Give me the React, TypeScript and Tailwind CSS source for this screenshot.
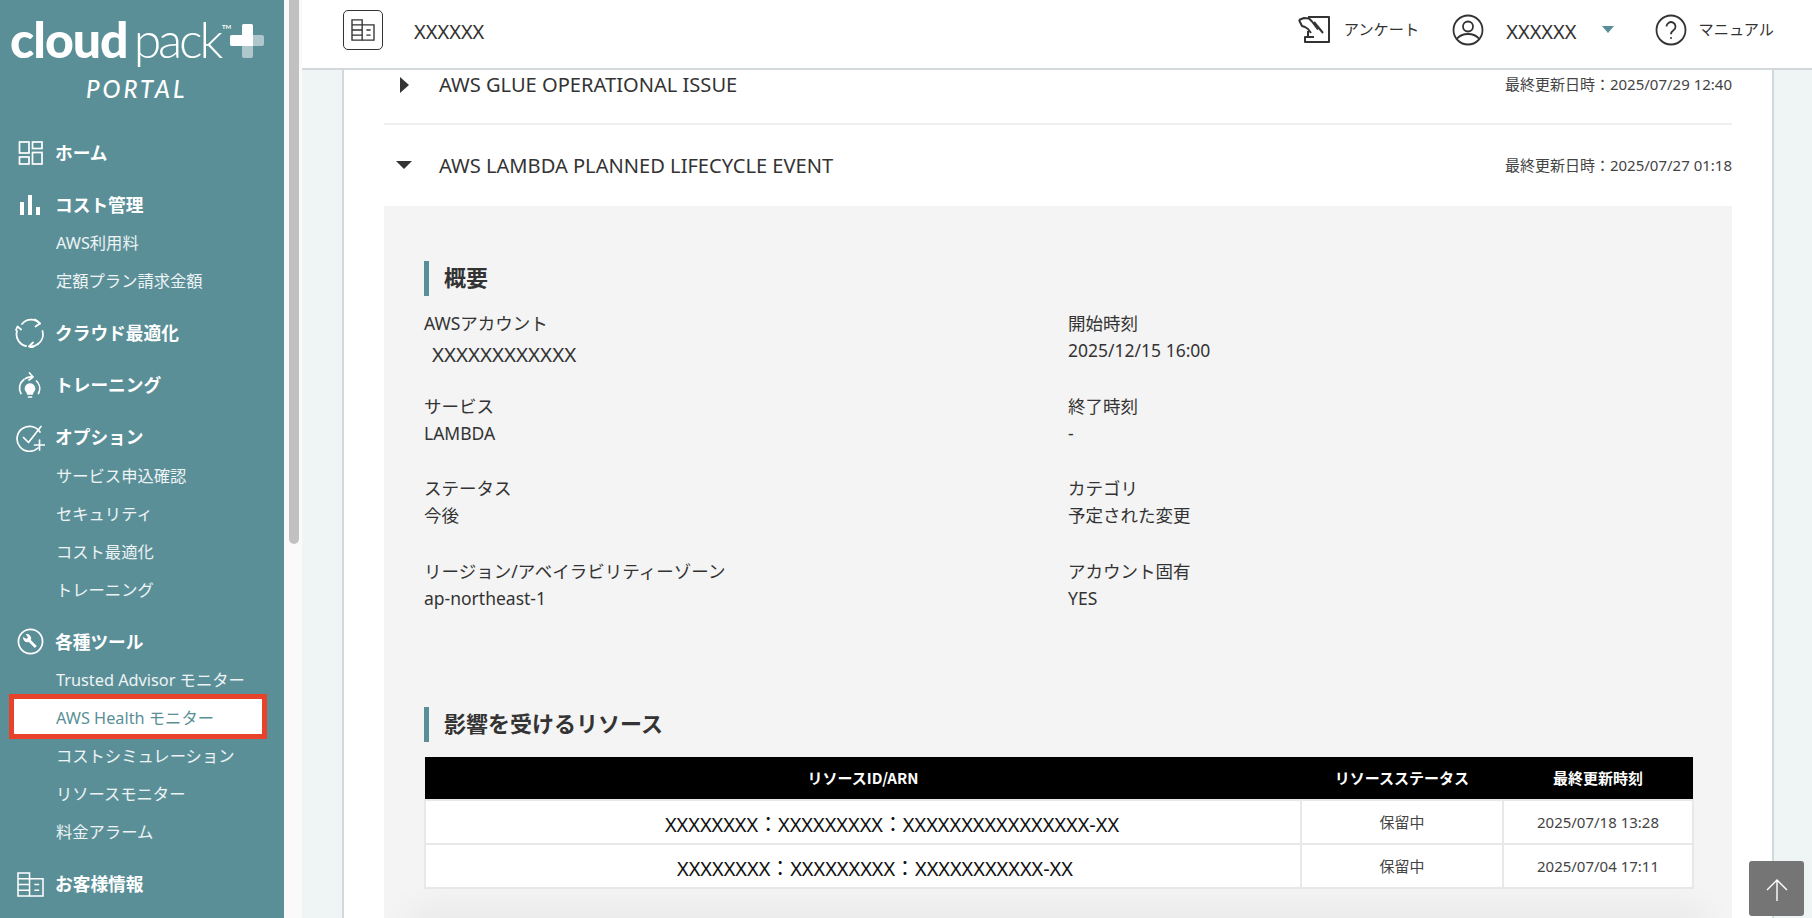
import React from 'react';

const FONT = '[font-family:"Noto_Sans","Noto_Sans_CJK_JP",sans-serif]';

function CompanyIcon({ className }: { className?: string }) {
  return (
    <svg viewBox="0 0 28 26" fill="none" stroke="currentColor" strokeWidth="1.6" className={className}>
      <path d="M1 1h12v24H1z" />
      <path d="M1 7h12M1 13h12M1 19h12" />
      <path d="M13 7h14v18H13" />
      <path d="M18 13h5M18 19h5" />
    </svg>
  );
}

function HomeIcon() {
  return (
    <svg viewBox="0 0 24 24" fill="none" stroke="currentColor" strokeWidth="1.7" className="w-[25px] h-[24px]">
      <rect x="1" y="1" width="9.5" height="11" />
      <rect x="14" y="1" width="9.5" height="6.5" />
      <rect x="1" y="16" width="9.5" height="7" />
      <rect x="14" y="11.5" width="9.500" height="11.5" />
    </svg>
  );
}

function BarsIcon() {
  return (
    <svg viewBox="0 0 22 22" fill="currentColor" className="w-[22px] h-[22px]">
      <rect x="1" y="8" width="4" height="13" />
      <rect x="9" y="1" width="4" height="20" />
      <rect x="17" y="13" width="4" height="8" />
    </svg>
  );
}

function CycleIcon() {
  return (
    <svg viewBox="0 0 30 30" fill="none" stroke="currentColor" strokeWidth="1.8" strokeLinecap="round" strokeLinejoin="round" className="w-[30px] h-[30px]">
      <path d="M7 6a12 12 0 0 1 18-.5" />
      <path d="M20 1.500l5 4-4.500 3" />
      <path d="M27.500 13a12 12 0 0 1-4.500 13" />
      <path d="M23 26a12 12 0 0 1-8 2.500" />
      <path d="M18 24.500l-4 4 4 1.500" />
      <path d="M11 28a12 12 0 0 1-9-15" />
      <path d="M1 12l1.500-3.500 3.500 3" />
    </svg>
  );
}

function TrainingIcon() {
  return (
    <svg viewBox="0 0 26 28" fill="none" stroke="currentColor" strokeWidth="1.7" strokeLinecap="round" strokeLinejoin="round" className="w-[26px] h-[28px]">
      <path d="M7 7.500a10.500 10.500 0 0 0-3 14" />
      <path d="M19.500 9a10.500 10.500 0 0 1 2 12.500" />
      <path d="M8.500 6.500a9 9 0 0 1 7-1.500" />
      <path d="M12.500 1l3.500 4-4 3" />
      <path d="M13 12a4.500 4.500 0 0 1 3 7.800l-.8 2.200h-4.400l-.8-2.200A4.500 4.500 0 0 1 13 12z" fill="currentColor" />
      <path d="M11.500 25h3" />
    </svg>
  );
}

function OptionIcon() {
  return (
    <svg viewBox="0 0 30 28" fill="none" stroke="currentColor" strokeWidth="1.7" strokeLinecap="round" strokeLinejoin="round" className="w-[30px] h-[28px]">
      <path d="M25 8a12.500 12.500 0 1 0-2 16" />
      <path d="M8.500 13.500l5 5L26 2.500" />
      <path d="M24.500 16v10M19.500 21h10" />
    </svg>
  );
}

function ToolIcon() {
  return (
    <svg viewBox="0 0 28 28" fill="none" className="w-[27px] h-[27px]">
      <circle cx="14" cy="14" r="12.500" stroke="currentColor" strokeWidth="1.8" />
      <path d="M9 6.500a4.500 4.500 0 0 1 5.300 6l6.200 6.200-2 2-6.300-6.200A4.500 4.500 0 0 1 6.500 9l3 2.500 2-2z" fill="currentColor" />
    </svg>
  );
}

function SurveyIcon() {
  return (
    <svg viewBox="0 0 32 30" fill="none" stroke="#333" strokeWidth="2" strokeLinejoin="round" className="w-[34px] h-[30px]">
      <path d="M10 2h21v25H17" />
      <path d="M1 5l5-2 5 .5 3 3 6 8" />
      <path d="M1 5l3 6 3 1 3 2 3 4" />
      <path d="M10 16v6M16 22H7v5h10" />
      <path d="M16 7l9 11" />
    </svg>
  );
}

function UserIcon() {
  return (
    <svg viewBox="0 0 32 32" fill="none" stroke="#333" strokeWidth="1.8" className="w-[32px] h-[32px]">
      <circle cx="16" cy="16" r="14.500" />
      <circle cx="16" cy="12.500" r="5" />
      <path d="M4.500 25c3-3.500 7-5 11.500-5s8.500 1.500 11.500 5" />
    </svg>
  );
}

function HelpIcon() {
  return (
    <svg viewBox="0 0 32 32" fill="none" stroke="#333" strokeWidth="1.8" className="w-[32px] h-[32px]">
      <circle cx="16" cy="16" r="14.500" />
      <path d="M11.500 12.500a4.500 4.500 0 1 1 7 3.800c-1.600 1.100-2.500 2-2.500 4" />
      <circle cx="16" cy="24" r="1" fill="#333" stroke="none" />
    </svg>
  );
}

function Logo() {
  return (
    <div className="h-[134px] flex flex-col pl-[10px] pt-[14px]">
      <div className="flex items-start h-[52px] text-white [font-family:Lato,sans-serif] leading-none">
        <span className="text-[50px] font-black tracking-[-1px]">cloud</span>
        <span className="text-[50px] font-light ml-[6px] tracking-[-3.2px]">pack</span>
        <span className="text-[6px] mt-[10px] ml-[2px] font-bold">TM</span>
        <svg viewBox="0 0 34 34" className="w-[34px] h-[34px] mt-[10px] ml-[-1px]">
          <rect x="0" y="11" width="34" height="11" rx="2" fill="#fff" opacity="0.5" />
          <rect x="12" y="0" width="11" height="34" rx="2" fill="#fff" opacity="0.5" />
          <path d="M12 2a2 2 0 0 1 2-2h7a2 2 0 0 1 2 2v20H2a2 2 0 0 1-2-2v-7a2 2 0 0 1 2-2h10z" fill="#fff" />
        </svg>
      </div>
      <div className="mt-[9px] ml-[76px] text-white text-[24px] font-medium italic tracking-[3px] leading-[28px] [font-family:Lato,sans-serif]">PORTAL</div>
    </div>
  );
}

function NavHead({ icon, label, first }: { icon: React.ReactNode; label: string; first?: boolean }) {
  return (
    <div className={`relative h-[38px] flex items-center pl-[55px] text-[17.7px] font-bold text-white ${first ? '' : 'mt-[14.2px]'}`}>
      <span className="absolute left-[14px] top-0 bottom-0 w-[32px] flex items-center justify-center">{icon}</span>
      {label}
    </div>
  );
}

function NavSub({ label }: { label: string }) {
  return <div className="h-[38px] flex items-center pl-[56px] text-[16.3px] text-white/90">{label}</div>;
}

function Sidebar() {
  return (
    <aside className="w-[284px] h-full shrink-0 bg-[#5a8f98] overflow-hidden">
      <Logo />
      <NavHead first icon={<HomeIcon />} label="ホーム" />
      <NavHead icon={<BarsIcon />} label="コスト管理" />
      <NavSub label="AWS利用料" />
      <NavSub label="定額プラン請求金額" />
      <NavHead icon={<CycleIcon />} label="クラウド最適化" />
      <NavHead icon={<TrainingIcon />} label="トレーニング" />
      <NavHead icon={<OptionIcon />} label="オプション" />
      <NavSub label="サービス申込確認" />
      <NavSub label="セキュリティ" />
      <NavSub label="コスト最適化" />
      <NavSub label="トレーニング" />
      <NavHead icon={<ToolIcon />} label="各種ツール" />
      <NavSub label="Trusted Advisor モニター" />
      <div className="relative h-[38px] flex items-center pl-[56px] text-[16.3px] text-[#5a8f98]">
        {/* red annotation box from the screenshot */}
        <div className="absolute left-[9px] w-[258px] top-[-5px] h-[45px] bg-white border-[5px] border-[#e8432a]" />
        <span className="relative">AWS Health モニター</span>
      </div>
      <NavSub label="コストシミュレーション" />
      <NavSub label="リソースモニター" />
      <NavSub label="料金アラーム" />
      <NavHead icon={<CompanyIcon className="w-[27px] h-[25px]" />} label="お客様情報" />
    </aside>
  );
}

function TopBar() {
  return (
    <header className="h-[70px] shrink-0 bg-white border-b-2 border-[#d3d9da] flex items-center pl-[41px] pr-[38px]">
      <div className="w-[40px] h-[40px] mb-[8px] border border-[#333] rounded-[5px] flex items-center justify-center text-[#333]">
        <CompanyIcon className="w-[24px] h-[22px]" />
      </div>
      <span className="ml-[31px] mb-[4px] text-[20px] text-[#333]">XXXXXX</span>
      <div className="ml-auto flex items-center text-[#333] mb-[9px]">
        <SurveyIcon />
        <span className="ml-[13px] text-[15.2px]">アンケート</span>
        <span className="ml-[33px]"><UserIcon /></span>
        <span className="ml-[22px] mt-[4px] text-[20px]">XXXXXX</span>
        <span className="ml-[25px] w-0 h-0 border-x-[6px] border-x-transparent border-t-[7px] border-t-[#5a8f98]" />
        <span className="ml-[41px]"><HelpIcon /></span>
        <span className="ml-[12px] text-[15.2px]">マニュアル</span>
      </div>
    </header>
  );
}

function EventRow({ open, title, date, className }: { open?: boolean; title: string; date: string; className: string }) {
  return (
    <div className={`flex items-center justify-between ${className}`}>
      <div className="flex items-center">
        {open ? (
          <span className="ml-[12px] mr-[27px] w-0 h-0 border-x-[8px] border-x-transparent border-t-[8px] border-t-[#333]" />
        ) : (
          <span className="ml-[16px] mr-[30px] w-0 h-0 border-y-[8px] border-y-transparent border-l-[9px] border-l-[#333]" />
        )}
        <span className="mt-[2px] text-[20.1px] text-[#333]">{title}</span>
      </div>
      <span className="text-[15px] text-[#444]">{date}</span>
    </div>
  );
}

function SectionTitle({ children }: { children: React.ReactNode }) {
  return (
    <h2 className="h-[35px] border-l-[5px] border-[#5a8f98] pl-[15px] pb-[2px] flex items-center text-[22px] font-bold text-[#333]">
      {children}
    </h2>
  );
}

function Field({ label, value, mono }: { label: string; value: string; mono?: boolean }) {
  return (
    <div className="text-[#333]">
      <div className="h-[27px] text-[17.5px] leading-[27px]">{label}</div>
      {mono ? (
        <div className="h-[27px] pl-[8px] pt-[4px] text-[20.5px] leading-[27px]">{value}</div>
      ) : (
        <div className="h-[27px] text-[17.5px] leading-[27px]">{value}</div>
      )}
    </div>
  );
}

const RESOURCES = [
  { arn: 'XXXXXXXX：XXXXXXXXX：XXXXXXXXXXXXXXXX-XX', status: '保留中', updated: '2025/07/18 13:28', cell: 'pl-[58px]' },
  { arn: 'XXXXXXXX：XXXXXXXXX：XXXXXXXXXXX-XX', status: '保留中', updated: '2025/07/04 17:11', cell: 'pl-[24px]' },
];

function ResourceTable() {
  return (
    <table className="mt-[15px] w-full table-fixed border-collapse">
      <colgroup>
        <col className="w-[876px]" />
        <col className="w-[202px]" />
        <col className="w-[190px]" />
      </colgroup>
      <thead>
        <tr className="h-[43px] bg-black text-white text-[15px] font-bold [font-family:'Noto_Sans_CJK_JP',sans-serif]">
          <th>リソースID/ARN</th>
          <th>リソースステータス</th>
          <th>最終更新時刻</th>
        </tr>
      </thead>
      <tbody>
        {RESOURCES.map((r) => (
          <tr key={r.updated} className="h-[44px] bg-white text-center text-[15px] text-[#444]">
            <td className={`border-2 border-[#e8e8e8] pt-[6px] text-[19.9px] text-[#111] ${r.cell}`}>{r.arn}</td>
            <td className="border-2 border-[#e8e8e8]">{r.status}</td>
            <td className="border-2 border-[#e8e8e8]">{r.updated}</td>
          </tr>
        ))}
      </tbody>
    </table>
  );
}

export default function App() {
  return (
    <div className={`${FONT} w-[1812px] h-[918px] flex overflow-hidden bg-white`}>
      <Sidebar />
      {/* page scrollbar */}
      <div className="w-[18px] h-full shrink-0 bg-[#fafafa] pl-[5px]">
        <div className="w-[10px] h-[544px] bg-[#c1c1c1] rounded-b-[5px]" />
      </div>
      <div className="relative flex-1 min-w-0 flex flex-col bg-[#eff5f5]">
        <TopBar />
        <main className="flex-1 min-h-0 overflow-hidden pl-[40px] pr-[38px]">
          <div className="h-full bg-white border-x-2 border-[#cfdadc] px-[40px]">
            <EventRow title="AWS GLUE OPERATIONAL ISSUE" date="最終更新日時：2025/07/29 12:40" className="h-[55px] pb-[24px] border-b-2 border-[#efefef]" />
            <EventRow open title="AWS LAMBDA PLANNED LIFECYCLE EVENT" date="最終更新日時：2025/07/27 01:18" className="h-[81px]" />
            <section className="relative h-[720px] bg-[#f4f4f4] px-[40px] pt-[55px]">
              <SectionTitle>概要</SectionTitle>
              <div className="mt-[14px] grid grid-cols-[644px_1fr] auto-rows-[82.5px]">
                <Field label="AWSアカウント" value="XXXXXXXXXXXX" mono />
                <Field label="開始時刻" value="2025/12/15 16:00" />
                <Field label="サービス" value="LAMBDA" />
                <Field label="終了時刻" value="-" />
                <Field label="ステータス" value="今後" />
                <Field label="カテゴリ" value="予定された変更" />
                <Field label="リージョン/アベイラビリティーゾーン" value="ap-northeast-1" />
                <Field label="アカウント固有" value="YES" />
              </div>
              <div className="mt-[67px]">
                <SectionTitle>影響を受けるリソース</SectionTitle>
              </div>
              <ResourceTable />
            </section>
          </div>
        </main>
        {/* soft shadow coming up from the bottom edge, clipped to the grey panel */}
        <div className="absolute left-[82px] w-[1348px] bottom-0 h-[50px] overflow-hidden">
          <div className="absolute left-[30px] right-[30px] top-full h-[10px] shadow-[0_0_36px_4px_rgba(0,0,0,0.09)]" />
        </div>
        <button className="absolute right-[8px] bottom-[2px] w-[55px] h-[55px] bg-[#757575] rounded-[3px] flex items-center justify-center">
          <svg viewBox="0 0 24 24" fill="none" stroke="#fff" strokeWidth="1.4" className="w-[24px] h-[26px] mt-[2px]">
            <path d="M12 23V2M2 12L12 2l10 10" />
          </svg>
        </button>
      </div>
    </div>
  );
}
